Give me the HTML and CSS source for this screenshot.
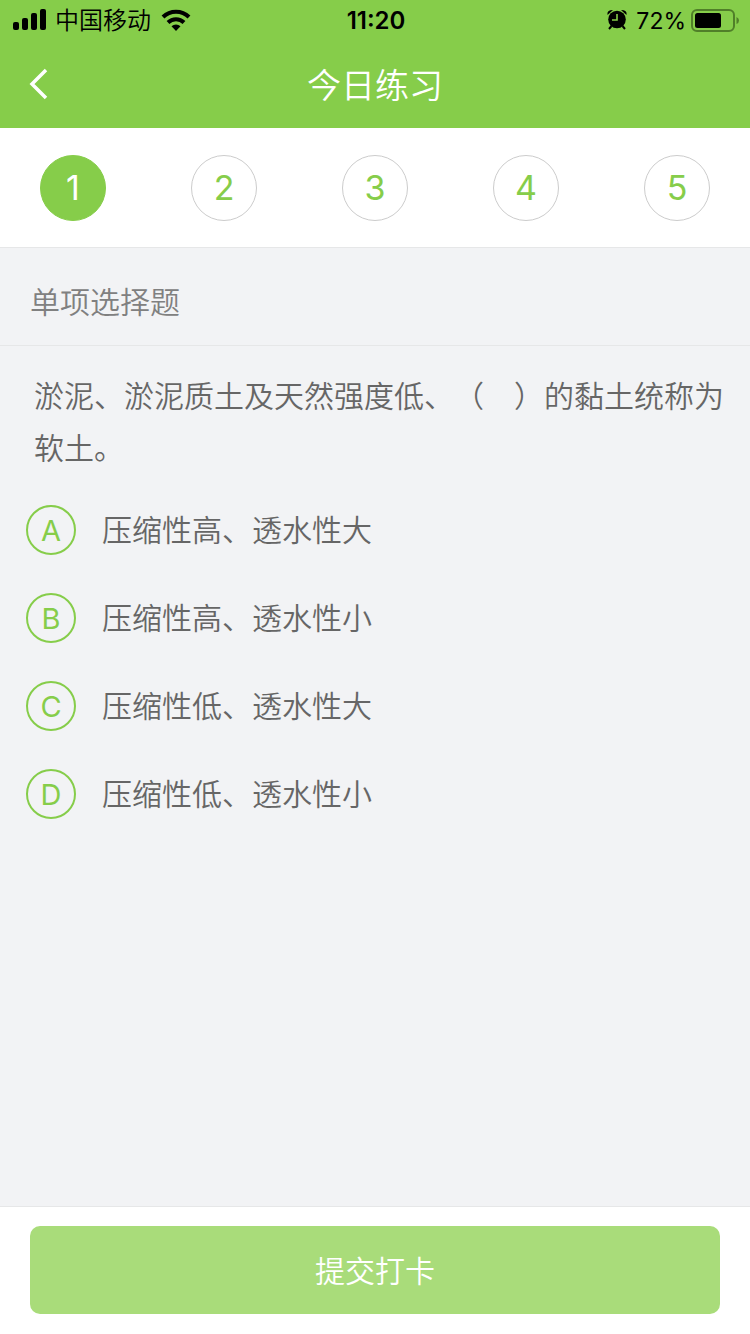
FILE: index.html
```html
<!DOCTYPE html>
<html lang="zh-CN">
<head>
  <meta charset="UTF-8" />
  <meta name="viewport" content="width=device-width, initial-scale=1.0">
  <title>今日练习</title>
  <link rel="stylesheet" href="styles.css">
</head>
<body>
  <header class="header">
    <div class="status-bar">
      <div class="status-left">
        <svg class="signal" width="34" height="22" viewBox="0 0 34 22">
          <rect x="0" y="12" width="6" height="8" rx="2" />
          <rect x="9" y="8" width="6" height="12" rx="2" />
          <rect x="18" y="3" width="6" height="17" rx="2" />
          <rect x="27" y="-1" width="6" height="21" rx="2" />
        </svg>
        <span class="carrier">中国移动</span>
        <svg class="wifi" width="30" height="22" viewBox="0 0 30 22">
          <path d="M2 7 A18.5 18.5 0 0 1 28 7" fill="none" stroke="#000" stroke-width="4" />
          <path d="M7 12.5 A11.5 11.5 0 0 1 23 12.5" fill="none" stroke="#000" stroke-width="4" />
          <path d="M10.5 16.3 A6.4 6.4 0 0 1 19.5 16.3 L15 21 Z" />
        </svg>
      </div>
      <span class="time">11:20</span>
      <div class="status-right">
        <svg class="alarm" width="20" height="22" viewBox="0 0 20 22">
          <path d="M0.5 5 Q-0.5 0 6 0 Z M19.5 5 Q20.5 0 14 0 Z" />
          <circle cx="10" cy="9.5" r="8.8" />
          <path d="M4.5 16 L2 19 M15.5 16 L18 19" stroke="#000" stroke-width="2" />
          <path d="M10 4 V10 H5" fill="none" stroke="#86cd4a" stroke-width="1.6" />
        </svg>
        <span class="percent">72%</span>
        <svg class="battery" width="48" height="24" viewBox="0 0 48 24">
          <rect x="1" y="1" width="42" height="21" rx="5" fill="none" stroke="#507f29" stroke-width="2" />
          <rect x="4" y="4" width="26" height="15" rx="2.5" />
          <path d="M45.5 8 Q48 9 48 11.5 Q48 14 45.5 15 Z" fill="#507f29" />
        </svg>
      </div>
    </div>

    <div class="nav-bar">
      <button type="button" class="back-btn" aria-label="返回">
        <svg width="20" height="32" viewBox="0 0 20 32">
          <path d="M17 2 L3 16 L17 30" fill="none" stroke="#fff" stroke-width="3.5" />
        </svg>
      </button>
      <h1>今日练习</h1>
    </div>
  </header>

  <nav class="steps">
    <button type="button" class="step active">1</button>
    <button type="button" class="step">2</button>
    <button type="button" class="step">3</button>
    <button type="button" class="step">4</button>
    <button type="button" class="step">5</button>
  </nav>

  <main class="content">
    <h2>单项选择题</h2>

    <form id="quiz-form" class="quiz">
      <p class="question">淤泥、淤泥质土及天然强度低、（　）的黏土统称为软土。</p>

      <div class="options">
        <label class="option">
          <input type="radio" name="answer" value="A" />
          <span class="letter">A</span>
          <span>压缩性高、透水性大</span>
        </label>
        <label class="option">
          <input type="radio" name="answer" value="B" />
          <span class="letter">B</span>
          <span>压缩性高、透水性小</span>
        </label>
        <label class="option">
          <input type="radio" name="answer" value="C" />
          <span class="letter">C</span>
          <span>压缩性低、透水性大</span>
        </label>
        <label class="option">
          <input type="radio" name="answer" value="D" />
          <span class="letter">D</span>
          <span>压缩性低、透水性小</span>
        </label>
      </div>
    </form>
  </main>

  <footer class="footer">
    <button type="submit" form="quiz-form" class="submit-btn">提交打卡</button>
  </footer>
</body>
</html>
```
FILE: styles.css
```css
:root {
  --primary-color: #86cd4a;
  --primary-light: #a9dc7a;
  --text-color: #666;
  --title-color: #808080;
  --bg-color: #f2f3f5;
  --border-color: #e6e7e8;
}

* {
  box-sizing: border-box;
}

body {
  margin: 0;
  min-height: 100vh;
  display: flex;
  flex-direction: column;
  font-family: Inter, "Noto Sans CJK SC", sans-serif;
  font-weight: 350;
  text-spacing-trim: space-all;
  color: var(--text-color);
  background-color: var(--bg-color);
}

button {
  padding: 0;
  border: none;
  background: none;
  font-family: inherit;
  font-weight: inherit;
  cursor: pointer;
}

svg {
  display: block;
  overflow: visible;
}

.header {
  background-color: var(--primary-color);
}

.status-bar {
  display: grid;
  grid-template-columns: 1fr auto 1fr;
  align-items: center;
  height: 40px;
  padding: 0 11px 0 13px;
  font-size: 24px;
  line-height: 42px;
  color: #000;
}

.status-left,
.status-right {
  display: flex;
  align-items: center;
}

.status-left {
  gap: 8px;
}

.status-right {
  justify-content: flex-end;
}

.wifi {
  margin-left: 2px;
}

.time {
  font-size: 24px;
  font-weight: 600;
}

.percent {
  margin: 0 5px 0 9px;
  font-size: 23px;
  font-weight: 400;
}

.nav-bar {
  display: grid;
  grid-template-columns: 60px 1fr 60px;
  align-items: center;
  height: 88px;
}

.back-btn {
  padding-left: 29px;
}

h1 {
  margin: 0;
  padding-bottom: 2px;
  font-size: 34px;
  font-weight: 350;
  text-align: center;
  color: #fff;
}

.steps {
  display: flex;
  justify-content: space-between;
  align-items: center;
  height: 120px;
  padding: 0 40px;
  background-color: #fff;
  border-bottom: 1px solid var(--border-color);
}

.step {
  width: 66px;
  height: 66px;
  border: 1px solid #ccc;
  border-radius: 50%;
  font-size: 34px;
  font-weight: 400;
  color: var(--primary-color);
}

.step.active {
  border-color: var(--primary-color);
  background-color: var(--primary-color);
  color: #fff;
}

.content {
  flex: 1;
}

h2 {
  margin: 0;
  padding: 32px 30px 21px;
  border-bottom: 1px solid var(--border-color);
  font-size: 30px;
  font-weight: 350;
  line-height: 44px;
  color: var(--title-color);
}

.quiz {
  padding: 24px 26px;
  font-size: 30px;
}

.question {
  margin: 0;
  padding-left: 8px;
  line-height: 52px;
}

.options {
  display: grid;
  gap: 38px;
  padding-top: 31px;
}

.option {
  display: flex;
  align-items: center;
  gap: 26px;
  line-height: 50px;
  cursor: pointer;
}

.option input {
  position: absolute;
  opacity: 0;
}

.letter {
  width: 50px;
  height: 50px;
  border: 2px solid var(--primary-color);
  border-radius: 50%;
  font-size: 29px;
  font-weight: 400;
  line-height: 48px;
  text-align: center;
  color: var(--primary-color);
}

.option input:checked + .letter {
  background-color: var(--primary-color);
  color: #fff;
}

.footer {
  padding: 19px 30px 20px;
  background-color: #fff;
  border-top: 1px solid var(--border-color);
}

.submit-btn {
  width: 100%;
  height: 88px;
  padding-bottom: 2px;
  border-radius: 10px;
  font-size: 30px;
  color: #fff;
  background-color: var(--primary-light);
}
```
